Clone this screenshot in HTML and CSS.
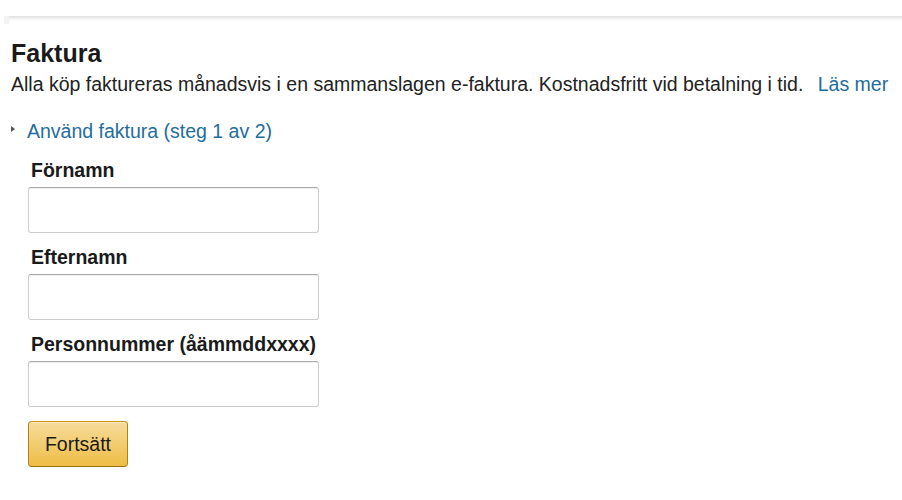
FILE: index.html
```html
<!DOCTYPE html>
<html lang="sv">
<head>
<meta charset="utf-8">
<link rel="stylesheet" href="styles.css">
</head>
<body>
<div class="page">
  <div class="divider"><span class="divider-cap"></span><span class="divider-line"></span></div>
  <h2 class="title">Faktura</h2>
  <p class="desc">Alla köp faktureras månadsvis i en sammanslagen e-faktura. Kostnadsfritt vid betalning i tid. <a class="link more" href="#">Läs mer</a></p>
  <div class="expander">
    <span class="caret"></span>
    <a class="link" href="#">Använd faktura (steg 1 av 2)</a>
  </div>
  <form class="form">
    <div class="field">
      <label class="label">Förnamn</label>
      <input class="input" type="text">
    </div>
    <div class="field">
      <label class="label">Efternamn</label>
      <input class="input" type="text">
    </div>
    <div class="field last">
      <label class="label">Personnummer (åämmddxxxx)</label>
      <input class="input" type="text">
    </div>
    <button type="button" class="btn">Fortsätt</button>
  </form>
</div>
</body>
</html>
```
FILE: styles.css
```css
* { box-sizing: border-box; }
html, body { margin: 0; padding: 0; background: #fff; }
body {
  font-family: "Liberation Sans", Arial, sans-serif;
  color: #222;
  font-size: 19.5px;
}
.page { padding: 16px 0 0 0; }
.divider { display: flex; height: 8px; padding-left: 4px; }
.divider-cap { width: 5px; height: 8px; background: #f3f3f3; }
.divider-line {
  flex: 1;
  height: 5px;
  background: linear-gradient(#e3e3e3 0, #e8e8e8 30%, #f6f6f6 60%, #fdfdfd 100%);
}
.title {
  margin: 15px 0 0 11px;
  font-size: 25px;
  font-weight: bold;
  line-height: 28px;
  color: #1a1a1a;
}
.desc {
  margin: 5px 0 0 11px;
  line-height: 24px;
  color: #222;
}
.link { color: #236d9c; text-decoration: none; }
.more { margin-left: 9px; }
.expander {
  display: flex;
  align-items: center;
  margin: 23px 0 0 11px;
  line-height: 24px;
}
.caret {
  width: 0; height: 0;
  border-left: 4px solid #555;
  border-top: 3px solid transparent;
  border-bottom: 3px solid transparent;
  margin-right: 12px;
  margin-top: -5px;
}
.form { margin: 15px 0 0 28px; display: flex; flex-direction: column; align-items: flex-start; }
.field { display: flex; flex-direction: column; margin-bottom: 12px; }
.field.last { margin-bottom: 14px; }
.label {
  font-weight: bold;
  line-height: 24px;
  margin: 0 0 5px 3px;
  color: #1a1a1a;
}
.input {
  width: 291px;
  height: 46px;
  border: 1px solid #cdcdcd;
  border-top-color: #a9a9a9;
  border-radius: 3px;
  box-shadow: 0 1px 0 rgba(0,0,0,.06) inset;
  font: inherit;
  padding: 0 8px;
}
.btn {
  width: 100px;
  height: 46px;
  border: 1px solid;
  border-color: #c89411 #b0820f #99710d;
  border-radius: 4px;
  background: linear-gradient(to bottom, #f7dc9c, #efbd45);
  box-shadow: 0 1px 0 rgba(255,255,255,.4) inset;
  font: inherit;
  color: #1a1a1a;
  padding: 0;
}
```
